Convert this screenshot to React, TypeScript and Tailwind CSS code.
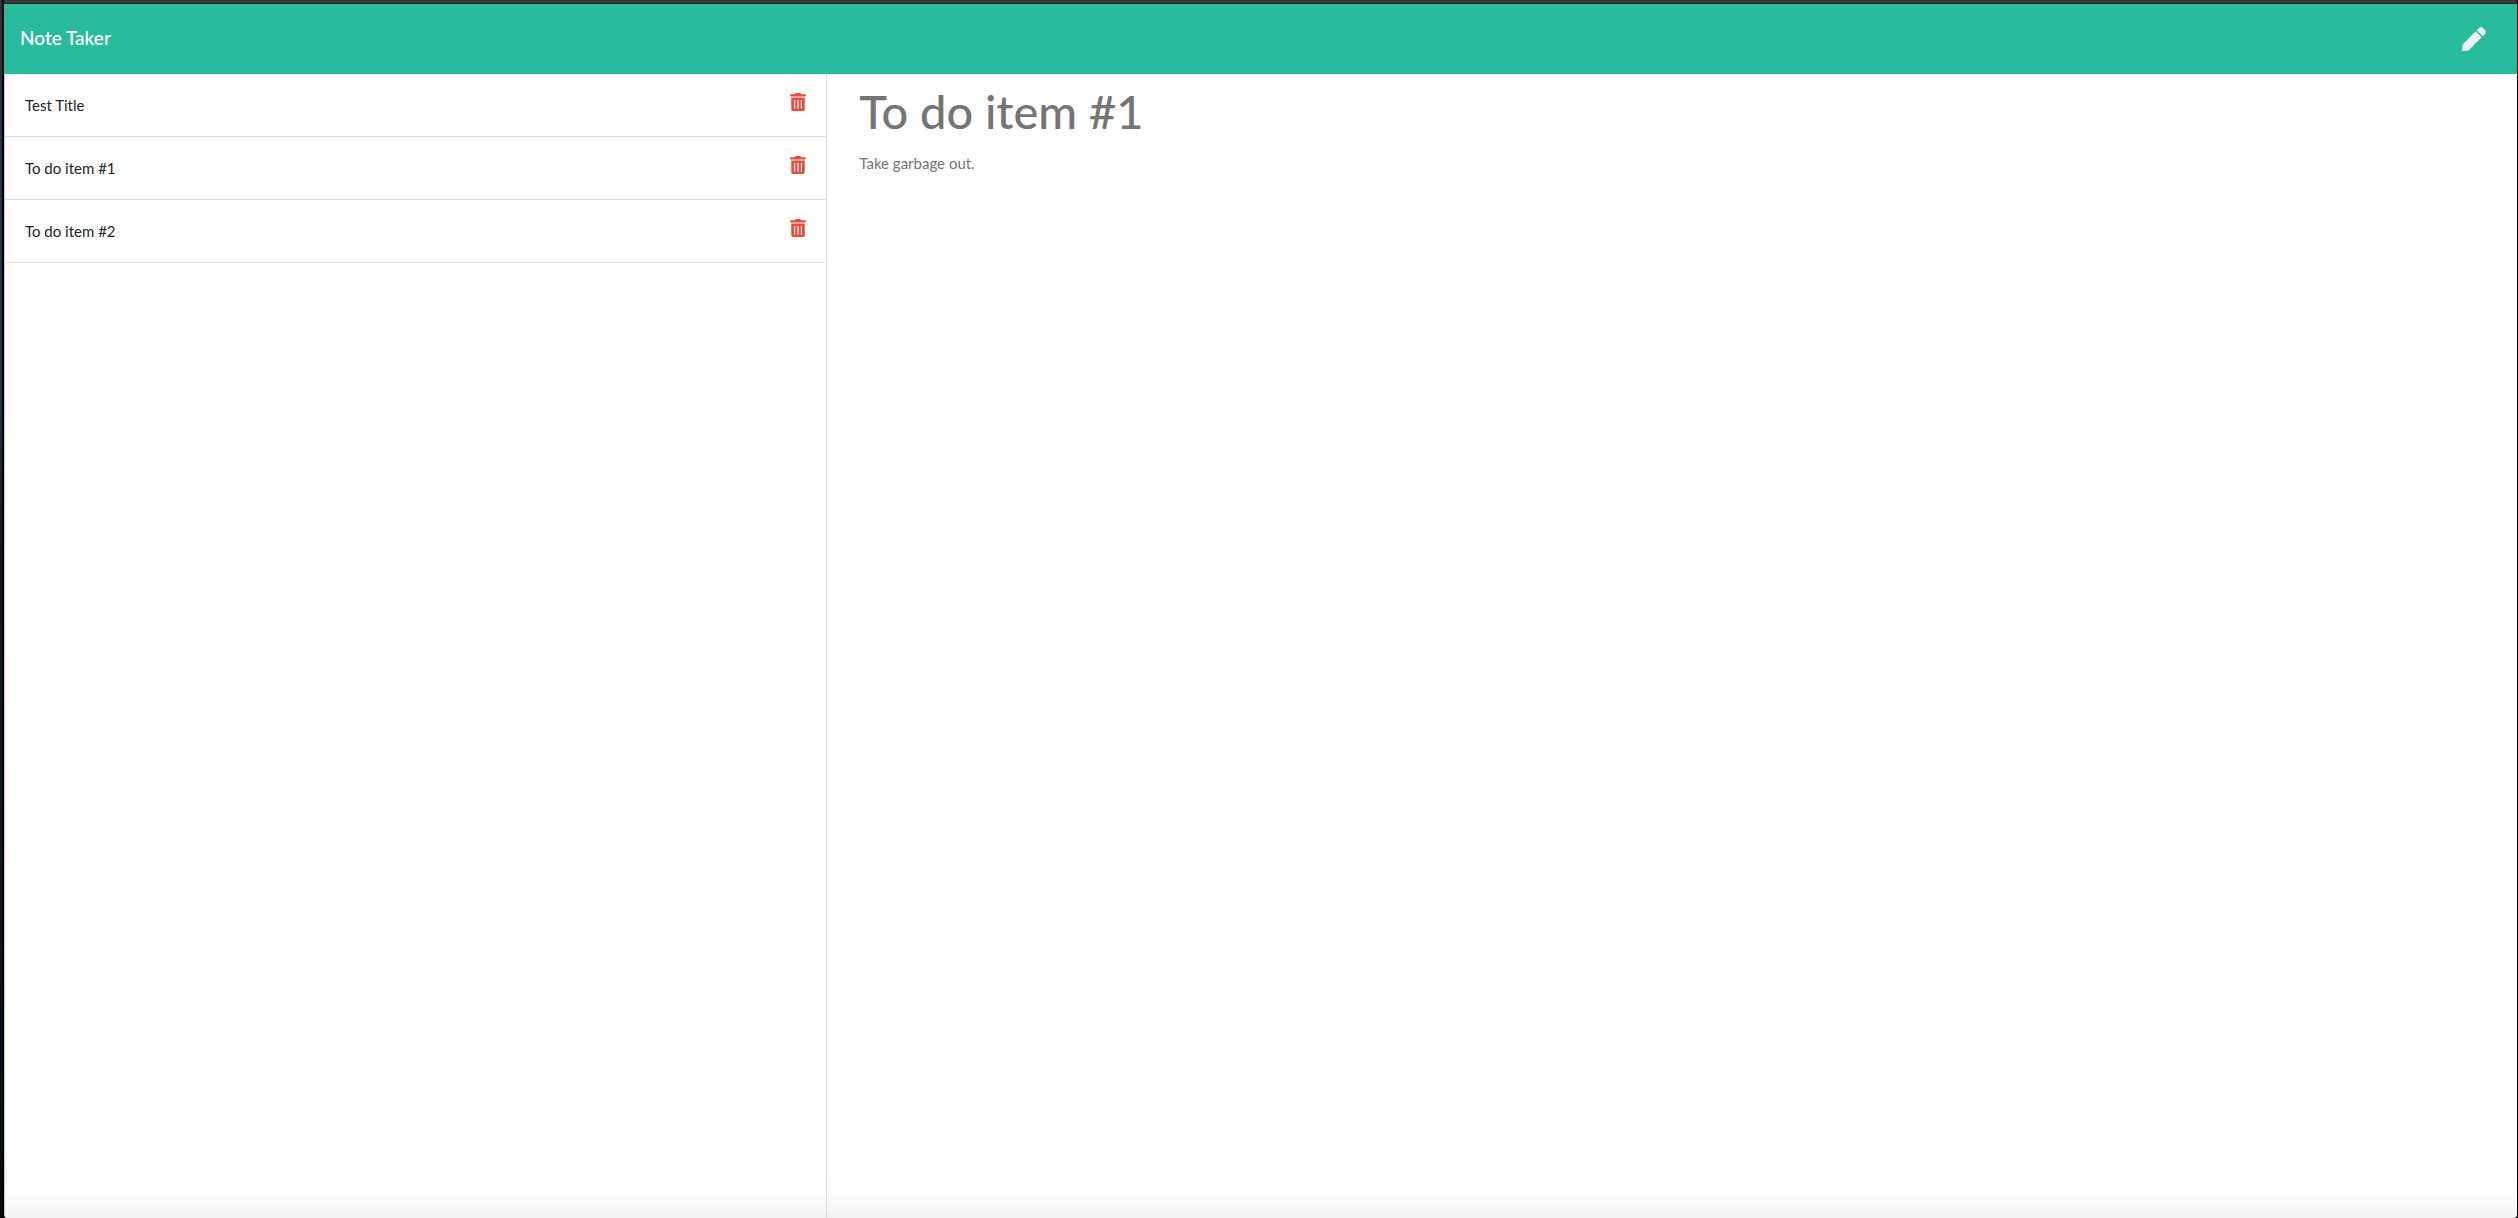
import { FaPen, FaTrashAlt } from "react-icons/fa";

const notes = ["Test Title", "To do item #1", "To do item #2"];

export default function App() {
  return (
    <div className="flex min-h-screen flex-col bg-[linear-gradient(to_bottom,#22354b,#22354b_400px,#0d1826_550px,#0c1a2b_800px,#020b14)] pl-0.5 font-['Lato',sans-serif] text-[15px] text-[#212529]">
      <div className="flex flex-1 flex-col border-r border-l-2 border-black bg-black">
        <div className="flex flex-1 flex-col overflow-hidden rounded-b-sm bg-white">
          <div className="h-1 border-b border-[#1f2425] bg-[#38383b]" />
          <nav className="flex h-[70px] items-center justify-between bg-[#29bc9c] pr-[31px] pb-px pl-4">
            <a href="#" className="text-[19px] font-medium text-white">
              Note Taker
            </a>
            <button type="button" aria-label="New note" className="text-[#ecf0f1]">
              <FaPen className="size-6" />
            </button>
          </nav>
          <div className="flex flex-1 border-l border-[#c8c4c2] bg-[linear-gradient(to_top,#f2f2f2,#fdfdfd_24px,#ffffff_48px)]">
            <aside className="w-[calc(33.333%-15px)] border-r border-[#dcdcdc]">
              <ul className="overflow-hidden rounded-b-sm border-b border-[#dcdcdc]">
                {notes.map((note) => (
                  <li
                    key={note}
                    className="flex h-[63px] items-start justify-between border-b border-[#dcdcdc] bg-white px-5 pt-[19px] last:h-[62px] last:border-b-0"
                  >
                    <button type="button" className="leading-6">
                      {note}
                    </button>
                    <button
                      type="button"
                      aria-label={`Delete ${note}`}
                      className="text-[#e84c3d]"
                    >
                      <FaTrashAlt className="h-[18px] w-4" />
                    </button>
                  </li>
                ))}
              </ul>
            </aside>
            <main className="flex min-w-0 flex-1 flex-col px-8 pt-[5px]">
              <input
                aria-label="Note title"
                readOnly
                placeholder="To do item #1"
                className="h-16 w-full text-[47px] font-medium outline-none placeholder:text-[#757575]"
              />
              <textarea
                aria-label="Note text"
                readOnly
                placeholder="Take garbage out."
                className="mt-2 w-full flex-1 resize-none leading-6 outline-none placeholder:text-[#757575]"
              />
            </main>
          </div>
        </div>
      </div>
    </div>
  );
}
